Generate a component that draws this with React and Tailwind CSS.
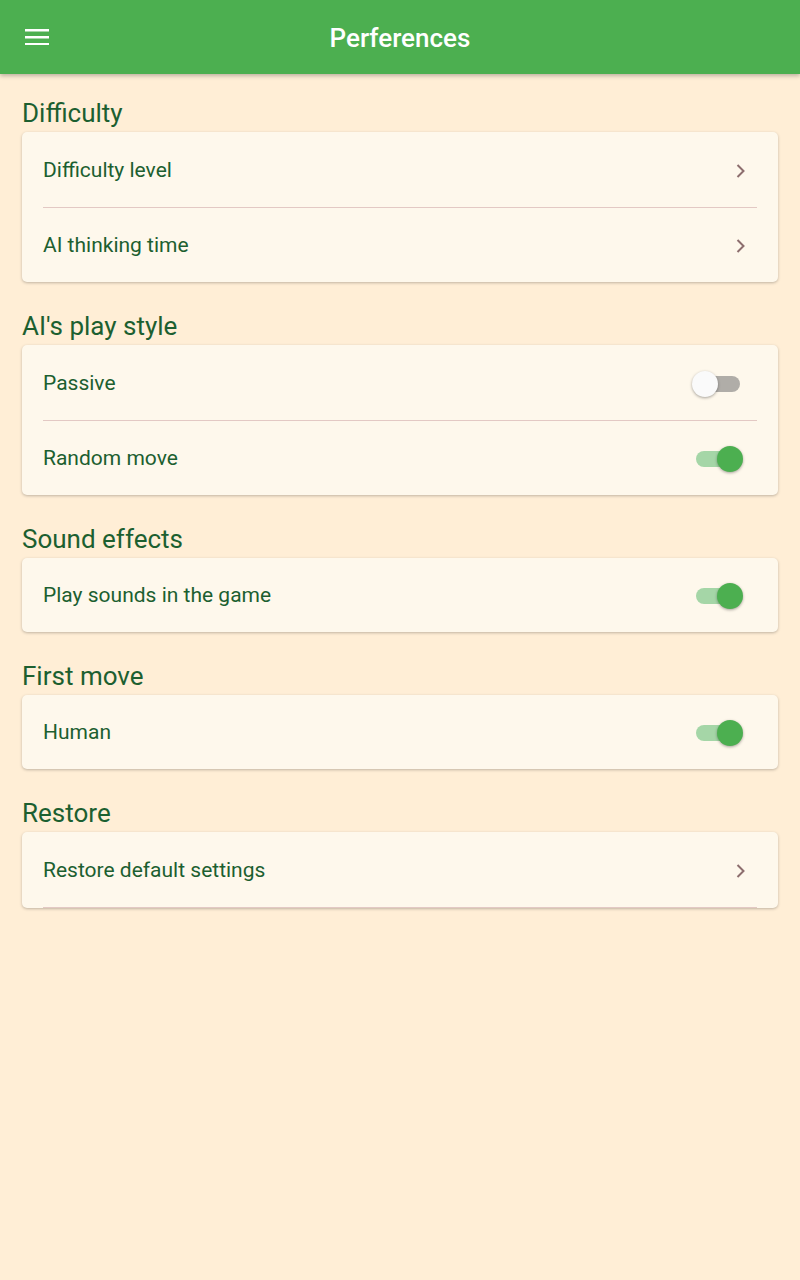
import React from 'react'

function Chevron() {
    return (
        <svg width="24" height="24" viewBox="0 0 24 24" className="text-[#8d6e6e]">
            <path d="M8.5 6l6 6-6 6" fill="none" stroke="currentColor" strokeWidth="2" />
        </svg>
    )
}

function Toggle({ on }) {
    return (
        <div className="relative w-[52px] h-[28px] flex items-center justify-center">
            <div className={`w-[44px] h-[16px] rounded-full ${on ? 'bg-[#a5d6a7]' : 'bg-[#b0ada8]'}`}></div>
            <div
                className={`absolute top-[1px] w-[26px] h-[26px] rounded-full shadow-[0_1px_3px_rgba(0,0,0,0.35)] ${on ? 'right-[1px] bg-[#4caf50]' : 'left-0 bg-[#fafafa]'}`}
            ></div>
        </div>
    )
}

function Row({ label, right, divider, toggle }) {
    return (
        <div className="px-[21px]">
            <div className={`flex items-center justify-between pt-[2px] ${divider ? 'h-[76px] border-b border-[#e3c9c4]' : 'h-[74px]'}`}>
                <span className="text-[21px] text-[#1c5f30]">{label}</span>
                <div className={toggle ? 'pr-[13px]' : 'pr-[4px]'}>{right}</div>
            </div>
        </div>
    )
}

function Section({ title, children }) {
    return (
        <section>
            <h2 className="px-[22px] text-[26px] leading-[32px] text-[#1c5f30]">{title}</h2>
            <div className="mx-[22px] mt-[3px] rounded-[5px] bg-[#fef8ec] shadow-[0_1px_3px_rgba(0,0,0,0.25)]">
                {children}
            </div>
        </section>
    )
}

export default function App() {
    return (
        <div className="min-h-[1280px] bg-[#ffeed6] font-['Roboto',sans-serif]">
            <header className="relative h-[74px] bg-[#4caf50] flex items-center justify-center shadow-[0_2px_4px_rgba(0,0,0,0.25)]">
                <button className="absolute left-[25px] top-[29px]">
                    <svg width="24" height="16" viewBox="0 0 24 16">
                        <rect x="0" y="0" width="24" height="2.5" fill="#fff" />
                        <rect x="0" y="7" width="24" height="2.5" fill="#fff" />
                        <rect x="0" y="14" width="24" height="2.5" fill="#fff" />
                    </svg>
                </button>
                <h1 className="pt-[2px] text-white text-[26px] font-medium">Perferences</h1>
            </header>

            <main className="pt-[23px] flex flex-col gap-[28px]">
                <Section title="Difficulty">
                    <Row label="Difficulty level" right={<Chevron />} divider />
                    <Row label="AI thinking time" right={<Chevron />} />
                </Section>
                <Section title="AI's play style">
                    <Row label="Passive" right={<Toggle on={false} />} divider toggle />
                    <Row label="Random move" right={<Toggle on />} toggle />
                </Section>
                <Section title="Sound effects">
                    <Row label="Play sounds in the game" right={<Toggle on />} toggle />
                </Section>
                <Section title="First move">
                    <Row label="Human" right={<Toggle on />} toggle />
                </Section>
                <Section title="Restore">
                    <Row label="Restore default settings" right={<Chevron />} divider />
                </Section>
            </main>
        </div>
    )
}
